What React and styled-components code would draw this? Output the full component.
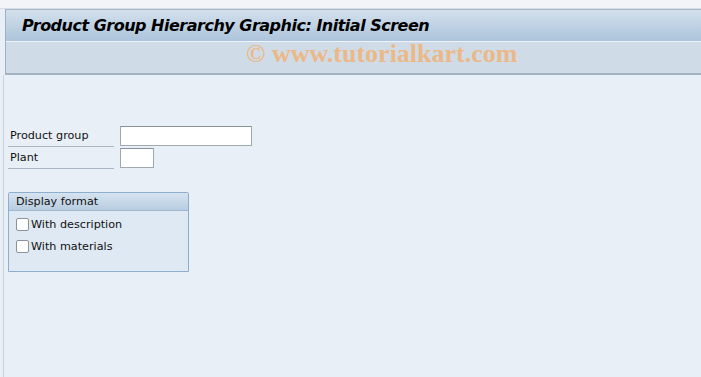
import React from "react";
import styled, { createGlobalStyle } from "styled-components";

const Global = createGlobalStyle`
  html, body { margin: 0; padding: 0; }
  body {
    width: 701px; height: 377px; overflow: hidden;
    background: #e8eff7;
    font-family: "DejaVu Sans", Tahoma, sans-serif;
  }
`;

const Page = styled.div`
  display: flex;
  flex-direction: column;
  height: 377px;
  background: #e8eff7;
`;

const TopStrip = styled.div`
  height: 8px;
  background: #f2f4f8;
  border-bottom: 1px solid #d7dee8;
`;

const Header = styled.div`
  margin-left: 5px;
  border-left: 1px solid #9fb0c2;
  border-top: 1px solid #a9b8c8;
  display: flex;
  flex-direction: column;
`;

const TitleBar = styled.div`
  height: 31px;
  background: linear-gradient(#d3e0ec, #adc4db);
  border-bottom: 1px solid #eef3f8;
  display: flex;
  align-items: center;
  padding-left: 16px;
`;

const Title = styled.h1`
  margin: 0;
  font-family: "DejaVu Sans", Tahoma, sans-serif;
  font-weight: bold;
  font-style: italic;
  font-size: 16px;
  letter-spacing: -0.5px;
  color: #000;
`;

const Toolbar = styled.div`
  height: 31px;
  background: #cfdce7;
  border-bottom: 2px solid #a4b3c2;
  display: flex;
  align-items: flex-start;
  padding: 0 0 0 240px;
`;

const Watermark = styled.span`
  font-family: "Liberation Serif", "Times New Roman", serif;
  font-weight: bold;
  font-size: 26px;
  line-height: 24px;
  color: #ecb887;
`;

const Body = styled.div`
  flex: 1;
  margin-left: 3px;
  border-left: 1px solid #c9d3de;
  padding: 50px 0 0 4px;
  display: flex;
  flex-direction: column;
`;

const FieldRow = styled.div`
  display: flex;
  align-items: center;
  height: 22px;
`;

const Label = styled.label`
  width: 106px;
  height: 21px;
  box-sizing: border-box;
  padding-left: 2px;
  display: flex;
  align-items: center;
  border-bottom: 1px solid #a9b5c2;
  font-size: 11.2px;
  color: #111;
  margin-right: 6px;
`;

const Input = styled.div`
  width: ${(p) => p.$w}px;
  height: 20px;
  box-sizing: border-box;
  background: #fff;
  border: 1px solid #a0a8b2;
  border-top-color: #8a929c;
`;

const Group = styled.div`
  margin-top: 23px;
  width: 181px;
  height: 80px;
  box-sizing: border-box;
  border: 1px solid #8eaed0;
  border-radius: 2px 2px 0 0;
  background: #dfe9f3;
  display: flex;
  flex-direction: column;
`;

const GroupHead = styled.div`
  height: 17px;
  background: linear-gradient(#d6e3ef, #b8cde1);
  border-bottom: 1px solid #9fb8d2;
  padding-left: 7px;
  font-size: 11.2px;
  color: #111;
  display: flex;
  align-items: center;
`;

const Checks = styled.div`
  padding: 6px 0 0 7px;
  display: flex;
  flex-direction: column;
  gap: 8px;
`;

const CheckRow = styled.div`
  display: flex;
  align-items: center;
  font-size: 11.2px;
  color: #111;
  height: 14px;
`;

const Box = styled.span`
  width: 13px;
  height: 13px;
  box-sizing: border-box;
  background: #fff;
  border: 1px solid #8a929c;
  border-radius: 2px;
  margin-right: 2px;
`;

export default function App() {
  return (
    <Page>
      <Global />
      <TopStrip />
      <Header>
        <TitleBar>
          <Title>Product Group Hierarchy Graphic: Initial Screen</Title>
        </TitleBar>
        <Toolbar>
          <Watermark>© www.tutorialkart.com</Watermark>
        </Toolbar>
      </Header>
      <Body>
        <FieldRow>
          <Label>Product group</Label>
          <Input $w={132} />
        </FieldRow>
        <FieldRow>
          <Label>Plant</Label>
          <Input $w={34} />
        </FieldRow>
        <Group>
          <GroupHead>Display format</GroupHead>
          <Checks>
            <CheckRow><Box />With description</CheckRow>
            <CheckRow><Box />With materials</CheckRow>
          </Checks>
        </Group>
      </Body>
    </Page>
  );
}
